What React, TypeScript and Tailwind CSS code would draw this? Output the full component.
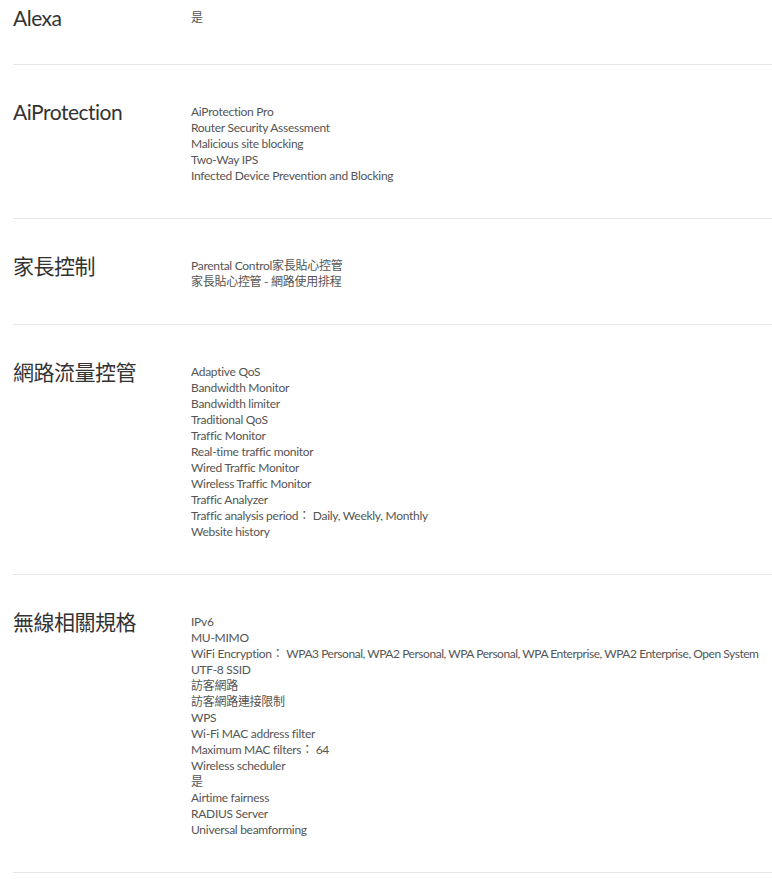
import React from 'react';

type Item = string | { key: string; value: string; tight?: boolean };

interface SpecRow {
	label: string;
	items: Item[];
}

const rows: SpecRow[] = [
	{ label: 'Alexa', items: ['是'] },
	{
		label: 'AiProtection',
		items: [
			'AiProtection Pro',
			'Router Security Assessment',
			'Malicious site blocking',
			'Two-Way IPS',
			'Infected Device Prevention and Blocking',
		],
	},
	{ label: '家長控制', items: ['Parental Control家長貼心控管', '家長貼心控管 - 網路使用排程'] },
	{
		label: '網路流量控管',
		items: [
			'Adaptive QoS',
			'Bandwidth Monitor',
			'Bandwidth limiter',
			'Traditional QoS',
			'Traffic Monitor',
			'Real-time traffic monitor',
			'Wired Traffic Monitor',
			'Wireless Traffic Monitor',
			'Traffic Analyzer',
			{ key: 'Traffic analysis period', value: 'Daily, Weekly, Monthly' },
			'Website history',
		],
	},
	{
		label: '無線相關規格',
		items: [
			'IPv6',
			'MU-MIMO',
			{
				key: 'WiFi Encryption',
				value: 'WPA3 Personal, WPA2 Personal, WPA Personal, WPA Enterprise, WPA2 Enterprise, Open System',
				tight: true,
			},
			'UTF-8 SSID',
			'訪客網路',
			'訪客網路連接限制',
			'WPS',
			'Wi-Fi MAC address filter',
			{ key: 'Maximum MAC filters', value: '64' },
			'Wireless scheduler',
			'是',
			'Airtime fairness',
			'RADIUS Server',
			'Universal beamforming',
		],
	},
];

const SpecSection: React.FC<{ row: SpecRow; first: boolean }> = ({ row, first }) => {
	return (
		<div className={`flex border-b border-[#e6e6e6] ${first ? 'pt-[10px] pb-[38px]' : 'pt-[39px] pb-[34px]'}`}>
			<div className="w-[178px] shrink-0 text-[21px] leading-[16px] tracking-[-0.5px] text-[#333]">{row.label}</div>
			<div className="flex flex-col text-[12px] leading-[16px] tracking-[-0.28px] text-[#555] whitespace-pre">
				{row.items.map((item, i) =>
					typeof item === 'string' ? (
						<div key={i}>{item}</div>
					) : (
						<div key={i}>
							{item.key}： <span className={item.tight ? 'tracking-[-0.46px]' : ''}>{item.value}</span>
						</div>
					),
				)}
			</div>
		</div>
	);
};

export default function App() {
	return (
		<div
			className="bg-white min-h-screen pl-[13px]"
			style={{ fontFamily: 'Lato, "Noto Sans CJK TC", sans-serif' }}
		>
			{rows.map((row, i) => (
				<SpecSection key={row.label} row={row} first={i === 0} />
			))}
		</div>
	);
}
